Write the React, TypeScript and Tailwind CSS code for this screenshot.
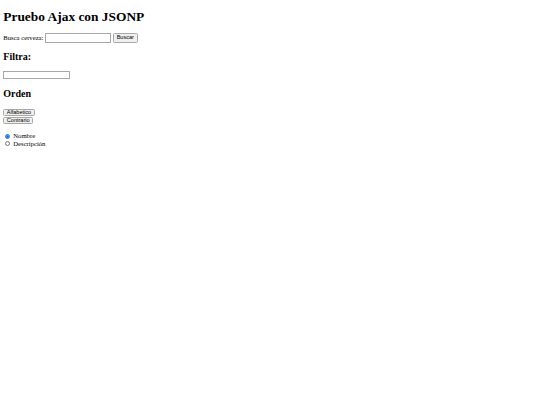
export default function App() {
  return (
    <div className="min-h-screen bg-white px-[3.3px] pt-px text-[6.67px] leading-[8.33px] text-black font-['Liberation_Serif',serif]">
      <h1 className="mt-[8px] text-[13.4px] font-bold leading-[15.3px]">Pruebo Ajax con JSONP</h1>
      <div className="mt-[8.8px] flex h-[9.8px] items-center">
        <span>Busca cerveza:</span>
        <input
          type="text"
          className="ml-[1.2px] h-[9.5px] w-[66.4px] border border-[#a8a8a8] bg-white"
        />
        <button className="ml-[1.8px] h-[9.5px] w-[25px] rounded-[1.5px] border border-[#a8a8a8] bg-[#efefef] text-[5.56px] leading-none font-['Liberation_Sans',sans-serif]">
          Buscar
        </button>
      </div>
      <h2 className="mt-[8px] text-[10px] font-bold leading-[11.5px]">Filtra:</h2>
      <input type="text" className="mt-[8.9px] block h-[7.8px] w-[66.4px] border border-[#a8a8a8] bg-white" />
      <h2 className="mt-[8.8px] text-[10px] font-bold leading-[11.5px]">Orden</h2>
      <div className="mt-[9.6px] flex flex-col items-start gap-[1.5px]">
        <button className="h-[7px] rounded-[1.5px] border border-[#a8a8a8] bg-[#efefef] px-[2.5px] text-[5.56px] leading-none font-['Liberation_Sans',sans-serif]">
          Alfabetico
        </button>
        <button className="h-[7px] rounded-[1.5px] border border-[#a8a8a8] bg-[#efefef] px-[2.5px] text-[5.56px] leading-none font-['Liberation_Sans',sans-serif]">
          Contrario
        </button>
      </div>
      <div className="mt-[8px] flex flex-col">
        <label className="flex h-[7.5px] items-center">
          <input type="radio" name="orden" defaultChecked className="ml-[1.7px] mr-[3.3px] h-[5px] w-[5px] accent-[#1a73e8]" />
          Nombre
        </label>
        <label className="flex h-[7.5px] items-center">
          <input type="radio" name="orden" className="ml-[1.7px] mr-[3.3px] h-[5px] w-[5px]" />
          Descripción
        </label>
      </div>
    </div>
  );
}
